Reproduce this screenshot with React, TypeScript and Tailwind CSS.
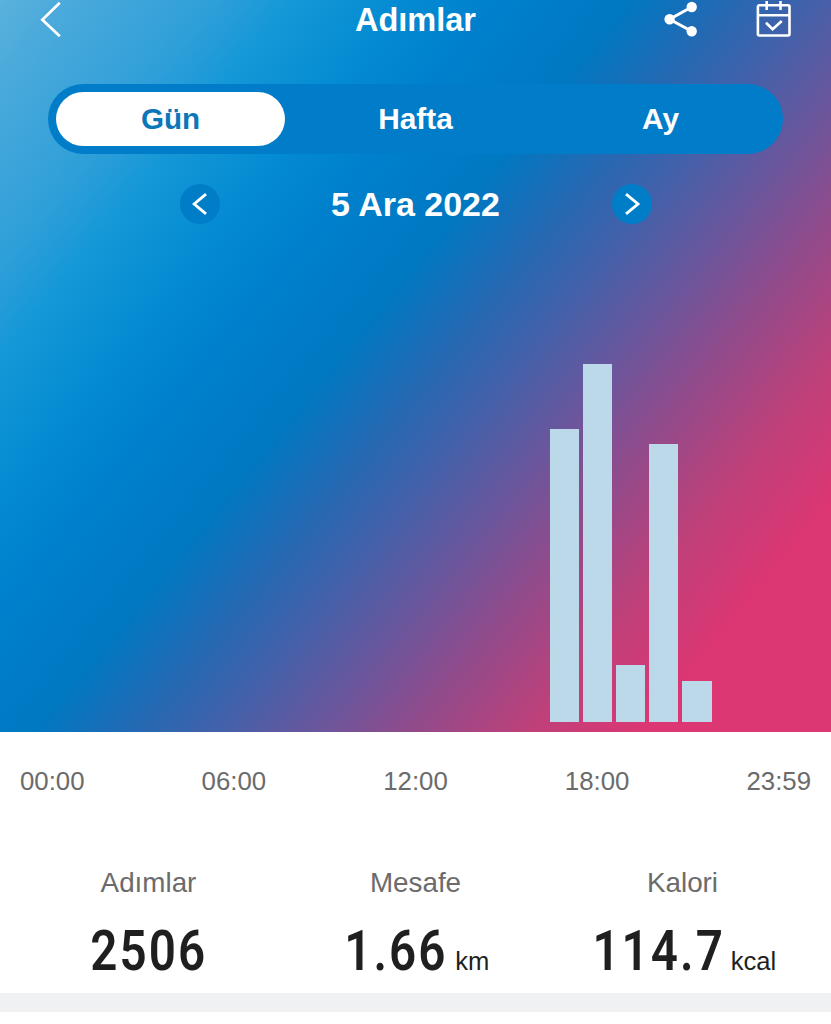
const steps = [0, 0, 0, 0, 0, 0, 0, 0, 0, 0, 0, 0, 0, 0, 0, 0, 293, 358, 57, 278, 41.5, 0, 0, 0];
const times = ["00:00", "06:00", "12:00", "18:00", "23:59"];
const tabs = ["Gün", "Hafta", "Ay"];
const stats = [
  { label: "Adımlar", value: "2506", unit: "", offset: "origin-center ml-[1px]" },
  { label: "Mesafe", value: "1.66", unit: "km", offset: "origin-right -ml-[16px] mr-2" },
  { label: "Kalori", value: "114.7", unit: "kcal", offset: "origin-right -ml-[20px] mr-1.5" },
];

function RoundArrow({ flip }: { flip?: boolean }) {
  return (
    <button className="flex size-10 items-center justify-center rounded-full bg-[#007dc7]">
      <svg width="40" height="40" viewBox="0 0 40 40" fill="none" stroke="white" strokeWidth="2.8">
        <path d={flip ? "M14 10.2L26 20L14 29.8" : "M26 10.2L14.2 20L26 29.8"} />
      </svg>
    </button>
  );
}

function Header() {
  return (
    <header className="grid h-10 grid-cols-3 pr-10 pl-10">
      <svg width="24" height="40" viewBox="0 0 24 40" fill="none" stroke="white" strokeWidth="2.7">
        <path d="M19.8 2.8L2.3 19.7L19.8 36.3" />
      </svg>
      <h1 className="text-center text-[32.5px] leading-10 font-bold text-white">Adımlar</h1>
      <div className="flex justify-end gap-[58px]">
        <svg width="36" height="40" viewBox="0 0 36 40" fill="white" stroke="white" strokeWidth="2.6">
          <path d="M30.7 7L8.6 19.3L30.7 31.2" fill="none" strokeWidth="3" />
          <circle cx="30.7" cy="7" r="3.9" />
          <circle cx="8.6" cy="19.3" r="3.9" />
          <circle cx="30.7" cy="31.2" r="3.9" />
        </svg>
        <svg width="36" height="40" viewBox="0 0 36 40" fill="none" stroke="white" strokeWidth="2.6">
          <rect x="2.9" y="5.3" width="31.6" height="30.2" rx="1.5" />
          <path d="M2.9 15.2H34.5M11.7 1V10M25.5 1V10M11 22.8L17.6 29.3L26.8 21" />
        </svg>
      </div>
    </header>
  );
}

export default function App() {
  return (
    <div className="flex h-[1024px] w-[831px] flex-col overflow-hidden bg-white font-['Liberation_Sans',Arial,sans-serif]">
      <section className="flex h-[732px] flex-col bg-[linear-gradient(129.2deg,#5ab2dd_0%,#4dabdb_4%,#2f9fd9_15%,#1598d7_20.5%,#048bd2_28%,#0080cc_35%,#0078c2_44%,#2469b3_51%,#4361aa_57%,#6b569c_64%,#944a8a_71%,#c04079_79%,#dc3673_87%,#dc3673_100%)]">
        <Header />
        <div className="mt-[43.5px] ml-12 flex h-[70px] w-[735px] rounded-full bg-[#007cc8] py-2">
          {tabs.map((tab, i) => (
            <div key={tab} className="flex-1 px-2">
              <div
                className={
                  i === 0
                    ? "h-full rounded-full bg-white text-center text-[29.6px] leading-[54px] font-bold text-[#0b77b9]"
                    : "h-full text-center text-[29.8px] leading-[54px] font-bold text-white"
                }
              >
                {tab}
              </div>
            </div>
          ))}
        </div>
        <div className="mt-[30px] flex h-10 items-center justify-between px-[179.5px]">
          <RoundArrow />
          <div className="pt-px text-[34px] leading-10 font-bold text-white">5 Ara 2022</div>
          <RoundArrow flip />
        </div>
        <div className="flex flex-1 items-end gap-[3.8px] px-5 pb-2.5">
          {steps.map((h, i) => (
            <div key={i} className="flex-1 bg-[#bcd9ea]" style={{ height: h }} />
          ))}
        </div>
      </section>
      <div className="mt-[33px] flex h-8 justify-between px-5 text-[25.8px] leading-8 text-[#6b6b6b]">
        {times.map((t) => (
          <span key={t}>{t}</span>
        ))}
      </div>
      <div className="mt-[70px] grid h-[126px] grid-cols-3 px-[15px]">
        {stats.map((s) => (
          <div key={s.label} className="flex flex-col items-center">
            <div className="text-[27.8px] leading-8 text-[#6b6b6b]">{s.label}</div>
            <div className="mt-[20px] flex h-[64px] items-baseline text-[#1f1f1f]">
              <span
                className={`inline-block scale-x-[0.85] font-['Roboto',sans-serif] text-[56px] leading-[64px] font-semibold tracking-[2.4px] ${s.offset}`}
              >
                {s.value}
              </span>
              {s.unit && <span className="text-[25.6px]">{s.unit}</span>}
            </div>
          </div>
        ))}
      </div>
      <div className="h-[19px] bg-[#eff1f3]" />
    </div>
  );
}
